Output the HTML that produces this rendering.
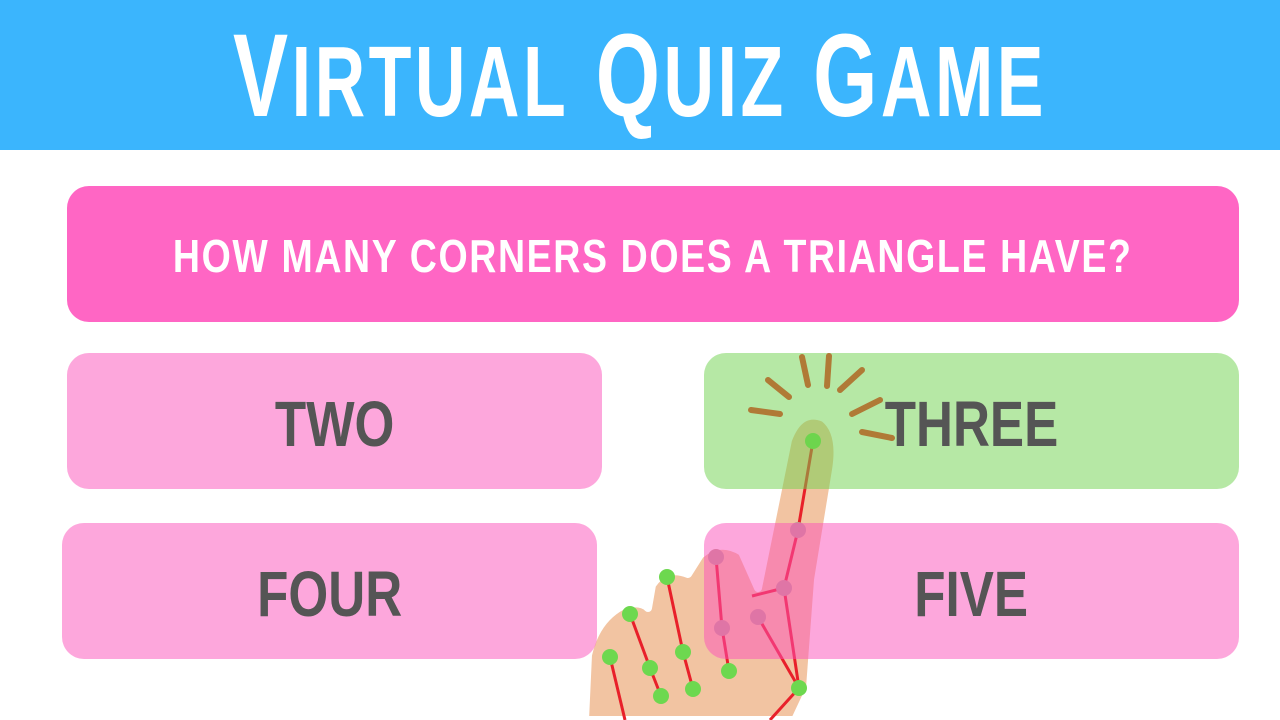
<!DOCTYPE html>
<html><head><meta charset="utf-8"><style>
body{margin:0;width:1280px;height:720px;background:#fff;position:relative;overflow:hidden;font-family:"Liberation Sans",sans-serif}
.hdr{position:absolute;left:0;top:0;width:1280px;height:150px;background:#3bb5fd}
.t{position:absolute;left:640px;top:76px;white-space:nowrap;color:#fff;font-weight:bold;font-size:118px;letter-spacing:5px;transform:translate(-50%,-50%) scaleX(0.70);line-height:1}
.t i{font-style:normal;font-size:100px}
.box{position:absolute;border-radius:22px;display:flex;align-items:center;justify-content:center;font-weight:bold;color:#555;white-space:nowrap}
.box span{display:inline-block;transform:scaleX(0.8)}
.q{left:67px;top:186px;width:1172px;height:136px;background:#ff66c4;color:#fff;font-size:46px}
.q span{transform:scaleX(0.815);letter-spacing:2px;position:relative;top:2px}
.a{width:535px;height:136px;font-size:64px;background:rgba(252,80,185,0.5)}
.a span{position:relative;top:3px}
.g{background:rgba(110,210,75,0.5)}
</style></head><body>
<div class="hdr"></div>
<div class="t">V<i>IRTUAL</i> Q<i>UIZ</i> G<i>AME</i></div>
<div class="box q"><span>HOW MANY CORNERS DOES A TRIANGLE HAVE?</span></div>
<svg style="position:absolute;left:0;top:0" width="1280" height="720">
<path d="M585 720 L588 655 Q596 620 622 606 Q640 600 648 608 L652 585 Q665 565 688 574 L700 555 Q720 538 742 552 L758 588 L788 440 Q800 408 824 418 Q842 432 836 470 L818 580 L810 688 L795 720 Z" fill="#f2c4a2" stroke="#fff" stroke-width="8" stroke-linejoin="round"/>
<g stroke="#e8202a" stroke-width="3" fill="none">
<polyline points="813,441 798,530 784,588 799,688"/>
<polyline points="716,557 722,628 729,671"/>
<polyline points="758,617 799,688"/>
<line x1="752" y1="596" x2="784" y2="588"/>
<polyline points="667,577 683,652 693,689"/>
<polyline points="630,614 650,668 661,696"/>
<polyline points="610,657 625,720"/>
<line x1="799" y1="688" x2="770" y2="720"/>
</g>
<g fill="#6dd84f">
<circle cx="813" cy="441" r="8"/><circle cx="667" cy="577" r="8"/><circle cx="683" cy="652" r="8"/><circle cx="693" cy="689" r="8"/><circle cx="630" cy="614" r="8"/><circle cx="650" cy="668" r="8"/><circle cx="661" cy="696" r="8"/><circle cx="610" cy="657" r="8"/><circle cx="729" cy="671" r="8"/><circle cx="799" cy="688" r="8"/>
</g>
<g fill="#c29a92"><circle cx="798" cy="530" r="8"/><circle cx="784" cy="588" r="8"/><circle cx="716" cy="557" r="8"/><circle cx="722" cy="628" r="8"/><circle cx="758" cy="617" r="8"/></g>
</svg>
<div class="box a" style="left:67px;top:353px"><span>TWO</span></div>
<div class="box a g" style="left:704px;top:353px"><span>THREE</span></div>
<div class="box a" style="left:62px;top:523px"><span>FOUR</span></div>
<div class="box a" style="left:704px;top:523px"><span>FIVE</span></div>
<svg style="position:absolute;left:0;top:0" width="1280" height="720">
<g stroke="#b07a36" stroke-width="6" stroke-linecap="round">
<line x1="751" y1="410" x2="780" y2="414"/><line x1="768" y1="380" x2="789" y2="397"/><line x1="802" y1="357" x2="808" y2="385"/><line x1="829" y1="356" x2="827" y2="386"/><line x1="862" y1="370" x2="840" y2="390"/><line x1="880" y1="400" x2="852" y2="414"/><line x1="862" y1="432" x2="892" y2="438"/>
</g>
</svg>
</body></html>
